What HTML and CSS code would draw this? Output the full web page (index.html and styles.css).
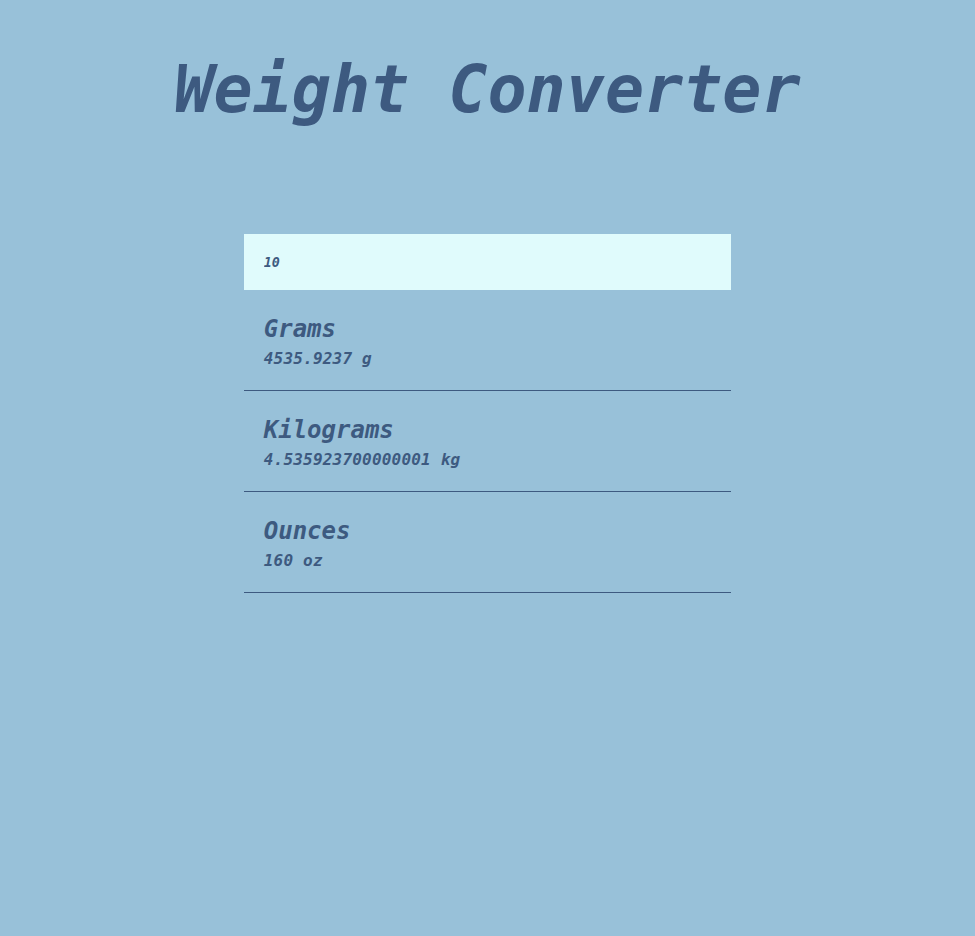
FILE: index.html
```html
<!DOCTYPE html>
<html lang="en">
<head>
<meta charset="utf-8">
<title>Weight Converter</title>
<link rel="stylesheet" href="styles.css">
</head>
<body>
<h1 class="title">Weight Converter</h1>
<main class="converter">
  <input class="amount" type="text" value="10" aria-label="Pounds">
  <section class="result">
    <h2 class="result-name">Grams</h2>
    <p class="result-value">4535.9237 g</p>
  </section>
  <section class="result">
    <h2 class="result-name">Kilograms</h2>
    <p class="result-value">4.535923700000001 kg</p>
  </section>
  <section class="result">
    <h2 class="result-name">Ounces</h2>
    <p class="result-value">160 oz</p>
  </section>
</main>
</body>
</html>
```
FILE: styles.css
```css
html, body {
  margin: 0;
  padding: 0;
}
body {
  background: #98c1d9;
  color: #3d5a80;
  font-family: "DejaVu Sans Mono", "Liberation Mono", monospace;
  font-style: italic;
  font-weight: bold;
  min-height: 936px;
}
.title {
  margin: 0;
  padding-top: 50px;
  font-size: 65px;
  line-height: 80px;
  text-align: center;
  font-weight: bold;
  font-style: italic;
  letter-spacing: 0;
}
.converter {
  width: 50%;
  margin: 104px auto 0;
  display: flex;
  flex-direction: column;
}
.amount {
  box-sizing: border-box;
  height: 56px;
  width: 100%;
  border: none;
  outline: none;
  background: #e0fbfc;
  color: #3d5a80;
  padding: 0 20px;
  font-family: inherit;
  font-style: italic;
  font-weight: bold;
  font-size: 13.33px;
}
.result {
  padding: 24px 20px 21px;
  border-bottom: 1px solid #3d5a80;
}
.result-name {
  margin: 0 0 5px;
  font-size: 24px;
  line-height: 30px;
}
.result-value {
  margin: 0;
  font-size: 16px;
  line-height: 20px;
  letter-spacing: 0.2px;
}
```
